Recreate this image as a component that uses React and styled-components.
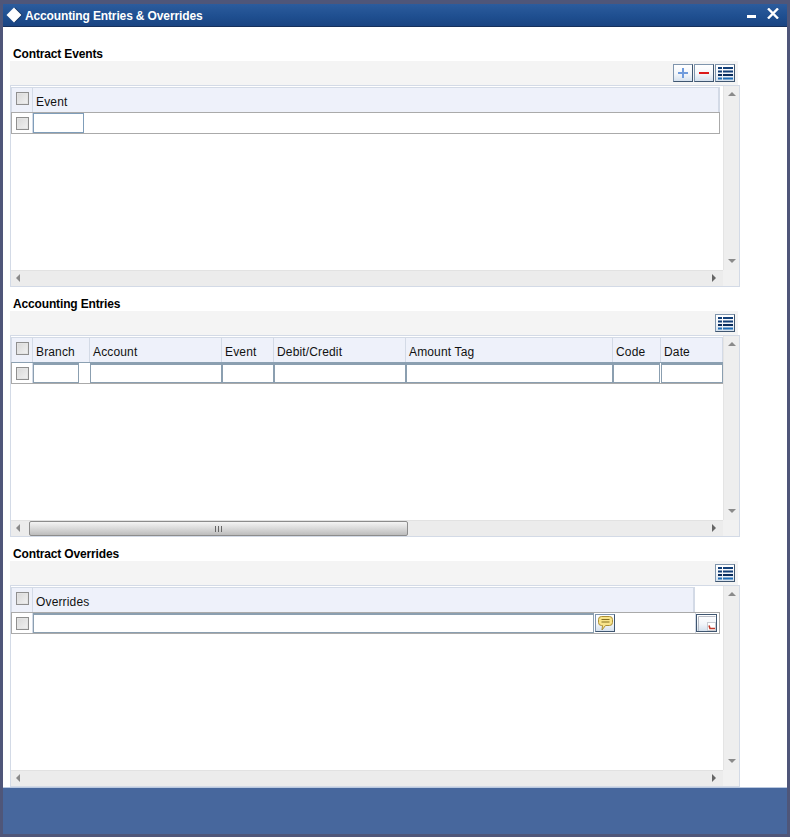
import React from 'react';
import styled, { createGlobalStyle } from 'styled-components';

const GlobalStyle = createGlobalStyle`
  html, body {
    margin: 0;
    padding: 0;
    background: #fff;
    font-family: "Liberation Sans", Arial, sans-serif;
  }
`;

const accountingColumns = [
  { label: 'Branch', width: 57, inputWidth: 46 },
  { label: 'Account', width: 132, inputWidth: 132 },
  { label: 'Event', width: 52, inputWidth: 52 },
  { label: 'Debit/Credit', width: 132, inputWidth: 132 },
  { label: 'Amount Tag', width: 207, inputWidth: 207 },
  { label: 'Code', width: 48, inputWidth: 47 },
  { label: 'Date', width: 62, inputWidth: 62 }
];

function ListIcon() {
  return (
    <svg width="15" height="13" viewBox="0 0 15 13">
      <path d="M0 1h4M5 1h10M0 4.5h4M5 4.5h10" stroke="#123f78" strokeWidth="2" />
      <path d="M0 8h4M5 8h10" stroke="#0a2c5c" strokeWidth="2" />
      <path d="M0 11.5h4M5 11.5h10" stroke="#1f6cb4" strokeWidth="2" />
    </svg>
  );
}

function PlusIcon() {
  return (
    <svg width="12" height="12" viewBox="0 0 12 12">
      <path d="M6 1v10M1 6h10" stroke="#6f9bdc" strokeWidth="2" />
    </svg>
  );
}

function MinusIcon() {
  return (
    <svg width="12" height="12" viewBox="0 0 12 12">
      <path d="M1 6h10" stroke="#dc1a1a" strokeWidth="2" />
    </svg>
  );
}

function CommentIcon() {
  return (
    <svg width="15" height="15" viewBox="0 0 15 15">
      <path
        d="M3.5 0.5h8a3 3 0 0 1 3 3v3a3 3 0 0 1-3 3H7.5L4 14l.5-4.5h-1a3 3 0 0 1-3-3v-3a3 3 0 0 1 3-3z"
        fill="#f8e48a"
        stroke="#ab8f35"
      />
      <path d="M3.5 3.5h8M3.5 6h8" stroke="#86701f" />
    </svg>
  );
}

function PopupIcon() {
  return (
    <svg width="18" height="15" viewBox="0 0 18 15">
      <path d="M0.5 15V0.5H17.5" fill="none" stroke="#b9bdc6" />
      <rect x="9.5" y="6.5" width="8" height="8" fill="#fff" stroke="#c9ccd2" />
      <path d="M11 9.5l1 3h5" fill="none" stroke="#c0392b" strokeWidth="1.6" />
    </svg>
  );
}

function DiamondIcon() {
  return (
    <svg width="17" height="16" viewBox="0 0 17 16">
      <path d="M9 0.5L16.5 8L9 15.5L1.5 8z" fill="#0e2a55" />
      <path d="M8 0.5L15.5 8L8 15.5L0.5 8z" fill="#fff" />
    </svg>
  );
}

function Scrollbars({ thumb, children }) {
  return (
    <GridBox>
      <Viewport>{children}</Viewport>
      <VerticalBar>
        <Arrow $dir="up" />
        <Arrow $dir="down" />
      </VerticalBar>
      <HorizontalBar>
        <Arrow $dir="left" />
        {thumb && (
          <Thumb>
            <Grip />
          </Thumb>
        )}
        <Arrow $dir="right" />
      </HorizontalBar>
      <Corner />
    </GridBox>
  );
}

export default function App() {
  return (
    <Frame>
      <GlobalStyle />
      <TitleBar>
        <DiamondIcon />
        <WindowTitle>Accounting Entries &amp; Overrides</WindowTitle>
        <WindowControls>
          <MinimizeGlyph />
          <svg width="12" height="11" viewBox="0 0 12 11">
            <path d="M1 0.5L11 10.5M11 0.5L1 10.5" stroke="#fff" strokeWidth="2.4" />
          </svg>
        </WindowControls>
      </TitleBar>

      <Content>
        <Section>
          <SectionTitle>Contract Events</SectionTitle>
          <Toolbar>
            <ToolButton aria-label="Add"><PlusIcon /></ToolButton>
            <ToolButton aria-label="Remove"><MinusIcon /></ToolButton>
            <ToolButton aria-label="Columns"><ListIcon /></ToolButton>
          </Toolbar>
          <Scrollbars>
            <HeadRow $width={709}>
              <CheckCell $head><Check type="checkbox" /></CheckCell>
              <HeadCell $grow>Event</HeadCell>
            </HeadRow>
            <BodyRow $width={709}>
              <CheckCell><Check type="checkbox" /></CheckCell>
              <Field $width={51} />
            </BodyRow>
          </Scrollbars>
        </Section>

        <Section>
          <SectionTitle>Accounting Entries</SectionTitle>
          <Toolbar>
            <ToolButton aria-label="Columns"><ListIcon /></ToolButton>
          </Toolbar>
          <Scrollbars thumb>
            <HeadRow $width={712}>
              <CheckCell $head><Check type="checkbox" /></CheckCell>
              {accountingColumns.map(column => (
                <HeadCell key={column.label} $width={column.width}>
                  {column.label}
                </HeadCell>
              ))}
            </HeadRow>
            <BodyRow $width={712} $wide>
              <CheckCell><Check type="checkbox" /></CheckCell>
              {accountingColumns.map(column => (
                <FieldCell key={column.label} $width={column.width}>
                  <Field $width={column.inputWidth} $heavy />
                </FieldCell>
              ))}
            </BodyRow>
          </Scrollbars>
        </Section>

        <Section>
          <SectionTitle>Contract Overrides</SectionTitle>
          <Toolbar>
            <ToolButton aria-label="Columns"><ListIcon /></ToolButton>
          </Toolbar>
          <Scrollbars>
            <HeadRow $width={684}>
              <CheckCell $head><Check type="checkbox" /></CheckCell>
              <HeadCell $grow>Overrides</HeadCell>
            </HeadRow>
            <BodyRow $width={709}>
              <CheckCell><Check type="checkbox" /></CheckCell>
              <Field $width={561} $heavy />
              <RowButton aria-label="Message"><CommentIcon /></RowButton>
              <RowSpacer />
              <PopupButton aria-label="Open"><PopupIcon /></PopupButton>
            </BodyRow>
          </Scrollbars>
        </Section>
      </Content>

      <Footer />
    </Frame>
  );
}

const Frame = styled.div`
  box-sizing: border-box;
  width: 790px;
  height: 837px;
  padding: 4px 3px 3px;
  background: #4f5679;
  display: flex;
  flex-direction: column;
  overflow: hidden;
`;

const TitleBar = styled.div`
  flex: 0 0 23px;
  display: flex;
  align-items: center;
  padding-left: 3px;
  background: linear-gradient(#2c5c9d, #1f4f90 55%, #1a4482);
  border-bottom: 1px solid #16305c;
  box-sizing: border-box;
`;

const WindowTitle = styled.div`
  margin: 2px 0 0 2px;
  color: #fff;
  font-size: 12px;
  font-weight: bold;
  letter-spacing: -0.13px;
`;

const WindowControls = styled.div`
  margin-left: auto;
  margin-right: 8px;
  margin-top: -4px;
  display: flex;
  align-items: center;
  gap: 11px;
`;

const MinimizeGlyph = styled.div`
  width: 9px;
  height: 3px;
  margin-top: 6px;
  background: #fff;
`;

const Content = styled.div`
  flex: 0 0 760px;
  box-sizing: border-box;
  padding: 10px 0 0 7px;
  background: #fff;
`;

const Section = styled.section`
  width: 730px;
  height: 250px;
  display: flex;
  flex-direction: column;
`;

const SectionTitle = styled.h2`
  flex: 0 0 24px;
  box-sizing: border-box;
  margin: 0;
  padding: 10px 0 0 3px;
  font-size: 12px;
  line-height: 14px;
  font-weight: bold;
  letter-spacing: -0.15px;
  color: #000;
`;

const Toolbar = styled.div`
  flex: 0 0 24px;
  width: 728px;
  box-sizing: border-box;
  padding: 3px 3px 0 0;
  display: flex;
  justify-content: flex-end;
  gap: 1px;
  background: #f4f4f4;
`;

const ToolButton = styled.button`
  box-sizing: border-box;
  width: 20px;
  height: 18px;
  padding: 0;
  display: flex;
  align-items: center;
  justify-content: center;
  border: 1px solid #3f5670;
  border-top-color: #7f95ad;
  border-left-color: #7f95ad;
  background: linear-gradient(#fff, #f3f6fa 55%, #d5e1ee);
`;

const GridBox = styled.div`
  box-sizing: border-box;
  width: 730px;
  height: 202px;
  border: 1px solid #d3dae6;
  display: grid;
  grid-template-columns: 712px 16px;
  grid-template-rows: 184px 16px;
`;

const Viewport = styled.div`
  padding-top: 1px;
  background: #fff;
  overflow: hidden;
`;

const VerticalBar = styled.div`
  box-sizing: border-box;
  padding: 6px 0 7px;
  display: flex;
  flex-direction: column;
  align-items: center;
  justify-content: space-between;
  background: #eeeeee;
  border-left: 1px solid #e4e4e4;
`;

const HorizontalBar = styled.div`
  box-sizing: border-box;
  position: relative;
  display: flex;
  align-items: center;
  justify-content: space-between;
  padding: 0 7px 2px 5px;
  background: #ececec;
  border-top: 1px solid #e2e2e2;
`;

const Corner = styled.div`
  background: #f1f1f1;
`;

const Arrow = styled.span`
  width: 0;
  height: 0;
  border-style: solid;
  border-color: transparent;
  ${({ $dir }) => $dir === 'up' && 'border-width: 0 4px 4px; border-bottom-color: #8a8a8a;'}
  ${({ $dir }) => $dir === 'down' && 'border-width: 4px 4px 0; border-top-color: #8a8a8a;'}
  ${({ $dir }) => $dir === 'left' && 'border-width: 4px 4px 4px 0; border-right-color: #8a8a8a;'}
  ${({ $dir }) => $dir === 'right' && 'border-width: 4px 0 4px 4px; border-left-color: #666;'}
`;

const Thumb = styled.div`
  position: absolute;
  left: 18px;
  top: 0;
  box-sizing: border-box;
  width: 379px;
  height: 15px;
  display: flex;
  align-items: center;
  justify-content: center;
  border: 1px solid #8c8c8c;
  border-radius: 2px;
  background: linear-gradient(#f4f4f4, #dcdcdc 45%, #bcbcbc);
`;

const Grip = styled.div`
  width: 7px;
  height: 6px;
  background: repeating-linear-gradient(90deg, #666 0 1px, transparent 1px 3px);
`;

const HeadRow = styled.div`
  box-sizing: border-box;
  width: ${({ $width }) => $width}px;
  height: 25px;
  display: flex;
  background: #eef1fa;
  border: 1px solid #d3dae6;
  border-bottom: 0;
`;

const BodyRow = styled.div`
  box-sizing: border-box;
  width: ${({ $width }) => $width}px;
  height: 22px;
  display: flex;
  align-items: center;
  background: #fff;
  border: 1px solid #aaaaaa;
  ${({ $wide }) => $wide && 'border-right: 0; border-top-color: #8ba0b2;'}
`;

const CheckCell = styled.div`
  flex: 0 0 21px;
  align-self: stretch;
  box-sizing: border-box;
  padding: ${({ $head }) => ($head ? '0 0 3px 4px' : '1px 0 0 4px')};
  display: flex;
  align-items: center;
  border-right: 1px solid #d3dae6;
`;

const Check = styled.input`
  appearance: none;
  box-sizing: border-box;
  width: 13px;
  height: 13px;
  margin: 0;
  border: 1px solid #8f8f8f;
  background: linear-gradient(135deg, #d8d8d8, #f2f2f2);
  box-shadow: inset 0 0 0 1px #e4e4e4;
`;

const HeadCell = styled.div`
  box-sizing: border-box;
  ${({ $grow, $width }) => ($grow ? 'flex: 1;' : `flex: 0 0 ${$width}px;`)}
  padding: 7px 0 0 3px;
  font-size: 12px;
  line-height: 14px;
  letter-spacing: 0.15px;
  color: #111;
  border-right: 1px solid #d3dae6;
`;

const FieldCell = styled.div`
  flex: 0 0 ${({ $width }) => $width}px;
  display: flex;
`;

const Field = styled.input`
  box-sizing: border-box;
  flex: 0 0 ${({ $width }) => $width}px;
  width: ${({ $width }) => $width}px;
  height: 20px;
  padding: 0;
  background: #fff;
  outline: none;
  border: 1px solid #7f9db9;
  ${({ $heavy }) => $heavy && 'border: 1px solid #8b9fb0; border-top-width: 2px;'}
`;

const RowButton = styled.button`
  box-sizing: border-box;
  flex: 0 0 20px;
  height: 18px;
  margin-left: 1px;
  padding: 0;
  display: flex;
  align-items: center;
  justify-content: center;
  border: 1px solid #3f5670;
  border-top-color: #7f95ad;
  border-left-color: #7f95ad;
  background: linear-gradient(#fff, #f3f6fa 55%, #d5e1ee);
`;

const RowSpacer = styled.div`
  flex: 0 0 80px;
  align-self: stretch;
  border-right: 1px solid #d3dae6;
`;

const PopupButton = styled(RowButton)`
  flex: 0 0 21px;
  margin-left: 0;
  border-color: #3f5670;
  align-items: flex-end;
  justify-content: flex-end;
`;

const Footer = styled.div`
  flex: 1;
  background: #47679d;
  border-top: 1px solid #b9c8e0;
  box-sizing: border-box;
`;
